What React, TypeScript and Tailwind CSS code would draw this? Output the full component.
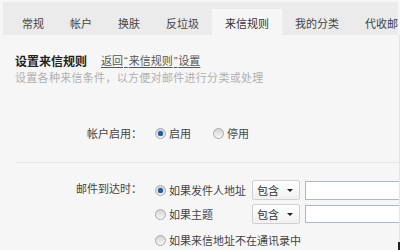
import React from 'react'

const tabs = ['常规', '帐户', '换肤', '反垃圾', '来信规则', '我的分类', '代收邮件']

function Radio({ checked }: { checked?: boolean }) {
  return (
    <span className="w-[11px] h-[11px] rounded-full border border-[#a9a9a9] bg-gradient-to-b from-[#d4d4d4] to-[#f8f8f8] flex items-center justify-center shrink-0">
      {checked && (
        <span className="w-[5px] h-[5px] rounded-full bg-[#1f5fa8] shadow-[0_0_1px_#1f5fa8]" />
      )}
    </span>
  )
}

function Select() {
  return (
    <div className="w-[48px] h-[20px] shrink-0 border border-[#cfcfcf] rounded-[2px] bg-gradient-to-b from-white to-[#f1f1f1] flex items-center justify-between pl-[4px] pr-[6px] text-[11px] text-[#333]">
      <span>包含</span>
      <span className="w-0 h-0 border-l-[3px] border-r-[3px] border-t-[3px] border-l-transparent border-r-transparent border-t-[#222]" />
    </div>
  )
}

const q = "font-['Liberation_Sans',sans-serif] px-[1px]"

export default function App() {
  return (
    <div className="w-[400px] h-[250px] overflow-hidden bg-[#f6f6f6] relative font-['Noto_Sans_CJK_SC',sans-serif] text-[#444]">
      <div className="ml-[3px] mr-[2px] mt-[2px] h-[33px] bg-[#ebebeb] flex items-end pl-[6px] whitespace-nowrap overflow-hidden">
        {tabs.map(t => (
          <div
            key={t}
            className={
              'h-[26px] px-[13px] pt-[3px] flex items-center text-[11px] shrink-0 ' +
              (t === '来信规则' ? 'bg-[#f6f6f6] text-[#333]' : 'text-[#444]')
            }
          >
            {t}
          </div>
        ))}
      </div>

      <div className="pl-[15px] border-r border-[#d9ecd9] h-[215px] overflow-hidden">
        <div className="mt-[18px] flex items-center h-[16px]">
          <span className="text-[12px] font-bold text-[#222]">设置来信规则</span>
          <a className="ml-[14px] text-[11px] text-[#555] underline underline-offset-2">
            返回<span className={q}>“</span>来信规则<span className={q}>”</span>设置
          </a>
        </div>
        <div className="mt-[1px] text-[11px] leading-[14px] tracking-[0.3px] text-[#b0b0b0] whitespace-nowrap">设置各种来信条件，以方便对邮件进行分类或处理</div>

        <div className="mt-[41px] flex items-center h-[16px] text-[11px]">
          <span className="w-[127px] shrink-0 text-right">帐户启用：</span>
          <span className="ml-[13px] flex items-center gap-[3px]">
            <Radio checked />
            <span>启用</span>
          </span>
          <span className="ml-[22px] flex items-center gap-[3px]">
            <Radio />
            <span>停用</span>
          </span>
        </div>

        <div className="mt-[21px] h-px bg-[#e6e6e6]" />

        <div className="mt-[17px] flex text-[11px]">
          <span className="w-[127px] shrink-0 text-right leading-[16px]">邮件到达时：</span>
          <div className="ml-[13px] flex flex-col shrink-0">
            <div className="flex items-center h-[20px]">
              <span className="w-[97px] shrink-0 flex items-center gap-[3px]">
                <Radio checked />
                <span>如果发件人地址</span>
              </span>
              <Select />
              <div className="ml-[5px] w-[120px] h-[19px] shrink-0 border border-[#a6b9d0] bg-white" />
            </div>
            <div className="mt-[4px] flex items-center h-[20px]">
              <span className="w-[97px] shrink-0 flex items-center gap-[3px]">
                <Radio />
                <span>如果主题</span>
              </span>
              <Select />
              <div className="ml-[5px] w-[120px] h-[18px] shrink-0 border border-[#a6b9d0] bg-white" />
            </div>
            <div className="mt-[7px] flex items-center h-[18px] gap-[3px]">
              <Radio />
              <span>如果来信地址不在通讯录中</span>
            </div>
          </div>
        </div>
      </div>
      <div className="absolute right-0 top-[242px] w-[2px] h-[8px] bg-[#222]" />
    </div>
  )
}
